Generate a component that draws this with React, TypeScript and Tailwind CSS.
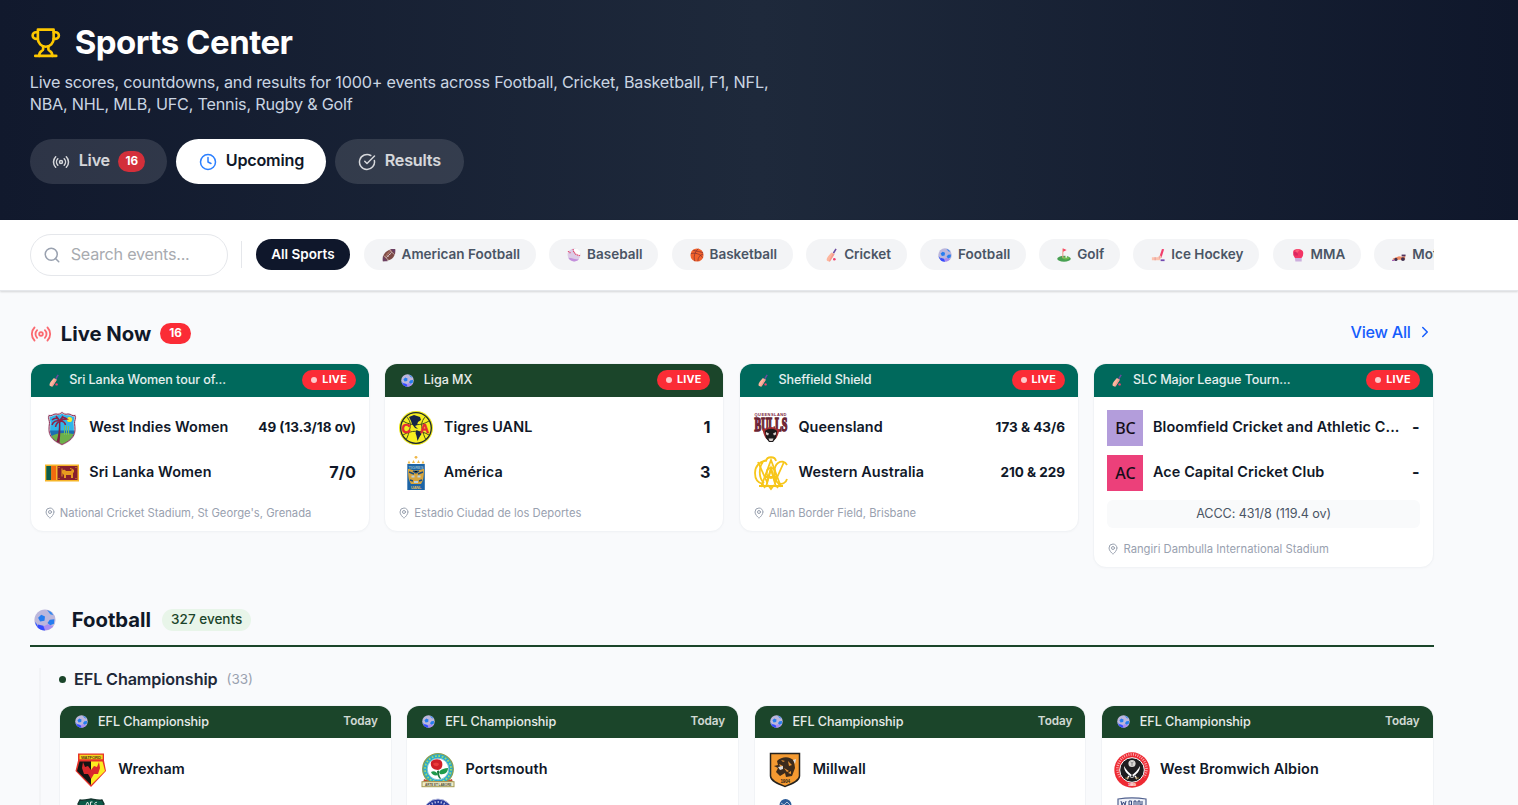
import { ReactNode, useState } from 'react';
import { ChevronRight, CircleCheckBig, Clock, MapPin, Radio, Search } from 'lucide-react';

type SportKey =
  | 'american-football'
  | 'baseball'
  | 'basketball'
  | 'cricket'
  | 'football'
  | 'golf'
  | 'ice-hockey'
  | 'mma'
  | 'motorsport';

interface Team {
  name: string;
  logo: ReactNode;
  score?: string;
}

interface LiveMatch {
  sport: SportKey;
  league: string;
  teams: Team[];
  venue: string;
  note?: string;
}

function TrophyIcon() {
  return (
    <svg
      className="mt-[2px] size-[31.500px] shrink-0 text-[#fdc700]"
      viewBox="0 0 24 24"
      fill="none"
      stroke="currentColor"
      strokeWidth="2"
      strokeLinecap="round"
      strokeLinejoin="round"
    >
      <path d="M6 9H4.500a2.500 2.500 0 0 1 0-5H6" />
      <path d="M18 9h1.500a2.500 2.500 0 0 0 0-5H18" />
      <path d="M4 22h16" />
      <path d="M10 14.660V17c0 .55-.47.98-.97 1.210C7.850 18.750 7 20.240 7 22" />
      <path d="M14 14.660V17c0 .55.47.98.97 1.210C16.150 18.750 17 20.240 17 22" />
      <path d="M18 2H6v7a6 6 0 0 0 12 0V2Z" />
    </svg>
  );
}

// Small sport glyphs, drawn on a 16x16 grid
function SportIcon({ sport, className }: { sport: SportKey; className: string }) {
  return (
    <svg className={className} viewBox="0 0 16 16">
      {sport === 'american-football' && (
        <g>
          <path d="M1 15C0 9 3 1 15 1c1 8-3 14-14 14Z" fill="#7d4b45" />
          <path d="M3 12C4 7 7 3 12 2 9 5 6 9 3 12Z" fill="#a0675a" />
          <path d="M1 9.500 6.500 15H1ZM9.500 1 15 6.500V1Z" fill="#6b3f63" />
          <path d="m2 8.500 5.500 5.500M8.500 2 14 7.500" stroke="#e9dff0" strokeWidth=".7" />
          <path d="m5 11 6-6M6 8.500 7.500 10M8 6.500 9.500 8" stroke="#f4eef8" strokeWidth=".7" />
        </g>
      )}
      {sport === 'baseball' && (
        <g>
          <circle cx="8" cy="8" r="7.300" fill="#dccbe6" />
          <path d="M1.500 11a7.300 7.300 0 0 0 12 2c-4 0-8-2-12-2Z" fill="#c38fdc" />
          <path d="M7.500 1c0 4.500 3.500 7.500 7.500 8V4l-3-3Z" fill="#fff" />
          <path
            d="M7 1c0 4.500 4 8 8.500 7.500M1 4c1.500 0 2.500 1 3 2.500"
            stroke="#e0476c"
            strokeWidth="1.300"
            strokeDasharray="1.500 .6"
            fill="none"
          />
        </g>
      )}
      {sport === 'basketball' && (
        <g>
          <circle cx="8" cy="8" r="7.500" fill="#f2622c" />
          <path
            d="M1 6.500c5-1.500 10 0 13.500 4.500M9.500.8C5 5 4 10 5.500 15M3.500 2.500C8 4 12 4 15 5.500M9 15c0-4 2-7 6-8"
            stroke="#7c3132"
            strokeWidth=".8"
            fill="none"
          />
        </g>
      )}
      {sport === 'cricket' && (
        <g>
          <path d="m10 5.500 3-5 1.500 1-3 5Z" fill="#6b4aa0" />
          <path d="M8.500 5 12 7l-5 8c-1 .8-4 0-4-1.500C3 11 6 8 8.500 5Z" fill="#fdb69e" />
          <path d="m10 6 2 1-5 8-1.500.3Z" fill="#f59a91" />
          <circle cx="11.800" cy="12.800" r="1.500" fill="#f0426f" />
        </g>
      )}
      {sport === 'football' && (
        <g>
          <circle cx="8" cy="8" r="7.700" fill="#bcb7dc" />
          <path d="M1.500 11.500a7.500 7.500 0 0 0 12.500 1l-4-1.500-4 2Z" fill="#a98df0" />
          <path d="m5.300 4.200 2.700 1.300-.4 3-3.200.6L3 6.400Z" fill="#257df0" />
          <path d="m11.500 7.800 3.300-.3-.3 3.200-2.700 1.200-2-1.800Z" fill="#257df0" />
          <path d="m9.500.8 3 1.400 1.600 2.400-2.300-.8Z" fill="#3489ef" />
          <path d="M.7 9.200 2.200 11l.4 2.200A7.700 7.700 0 0 1 .7 9.200Z" fill="#315cff" />
          <path d="m2.800 11.200 4 1 1.200 3.400c-2.500 0-4.500-1-5.600-2.600Z" fill="#334cff" />
        </g>
      )}
      {sport === 'golf' && (
        <g>
          <ellipse cx="8" cy="12.300" rx="7.700" ry="3.400" fill="#47a052" />
          <ellipse cx="10" cy="11.500" rx="4" ry="1.500" fill="#72ba52" />
          <path d="M6 .5h1.300V11H6Z" fill="#e9a391" />
          <path d="m7 .5 4 1.800-4 2Z" fill="#f8405f" />
          <circle cx="10.500" cy="10" r="1" fill="#fff" />
        </g>
      )}
      {sport === 'ice-hockey' && (
        <g>
          <path d="M12.500 1 15 1.500 12 11l-2.500-.5Z" fill="#f13d6b" />
          <path d="M1 10.500h6.500l3-2 1.500 1-2 4.500H1Z" fill="#fcc2ae" />
          <path d="M4 10.500h1.500V14H4ZM9 9.500l2 .3-1.200 3Z" fill="#e8a5a2" />
          <rect x="11" y="13" width="4.500" height="2" fill="#7248b0" />
        </g>
      )}
      {sport === 'mma' && (
        <g>
          <path d="M2.500 4C2.500 0 14 0 14 5.500c0 3.500-1 4.500-2 6H4.500L2.500 8Z" fill="#f33465" />
          <path d="M5 3c1.500-2 4-1.500 5-1L6 7Z" fill="#fa5b78" />
          <path d="M3 5c3-1 5 0 5 3.500H4Z" fill="#d92761" />
          <path d="M4.500 11.500h7.700v4H5Z" fill="#cdaedd" />
        </g>
      )}
      {sport === 'motorsport' && (
        <g>
          <path d="m1 12 4-1.500 3-1 3 .5 4-1v4.500H1Z" fill="#f08a62" />
          <path d="M11 7.500h4.500v2H11Z" fill="#54355f" />
          <circle cx="4.500" cy="13" r="1.800" fill="#40304f" />
          <circle cx="12.500" cy="12.700" r="2.200" fill="#40304f" />
          <path d="M0 13.500h3v1.200H0Z" fill="#9c4ba6" />
        </g>
      )}
    </svg>
  );
}

function Crest({ children }: { children: ReactNode }) {
  return (
    <svg className="size-9 shrink-0" viewBox="0 0 36 36">
      {children}
    </svg>
  );
}

const westIndies = (
  <Crest>
    <path
      d="M5 5.500C8 6.500 9 4 12 4c3 .8 4 0 6-1.500C20 4 21 4.800 24 4c3 0 4 2.500 7 1.500 1.500 3-1 5-.5 8 1 8 1.500 15-12.500 21C4 28.500 4.500 21.500 5.500 13.500 6 10.500 3.500 8.500 5 5.500Z"
      fill="#2fb5ea"
      stroke="#e5d7e0"
      strokeWidth="2"
    />
    <path d="M6 20.500h24.500c-.5 6-4 10-12.500 13.500C10 31 6.500 27 6 20.500Z" fill="#1c6fb0" />
    <path d="M7.500 26c6-4 15-3.500 22-2-2 5-6 8-11.500 10.300C12.500 32 9 30 7.500 26Z" fill="#6cb14a" />
    <circle cx="25.500" cy="9.500" r="2.600" fill="#f3e72c" />
    <path d="M20.500 16v9M22.500 15.500V25M24.500 16v9" stroke="#74bd63" strokeWidth="1" />
    <path d="M15 11c0 8-.5 14-2.500 21l3 1c1-8 1-14 .8-22Z" fill="#7e1f42" />
    <path
      d="M8 10c3-3 6-2 8 1 1-4 4-4.500 7-2-3 0-5 0-7 2 3 0 5 1.500 5.500 4M16 11c-4-1-7 1-8 4M16 11c-2 1-4 3-4.500 6M12 6l4 5 3-5"
      fill="none"
      stroke="#8e2248"
      strokeWidth="1.500"
    />
    <path
      d="M5 5.500C8 6.500 9 4 12 4c3 .8 4 0 6-1.500C20 4 21 4.800 24 4c3 0 4 2.500 7 1.500 1.500 3-1 5-.5 8 1 8 1.500 15-12.500 21C4 28.500 4.500 21.500 5.500 13.500 6 10.500 3.500 8.500 5 5.500Z"
      fill="none"
      stroke="#93385c"
      strokeWidth="1"
    />
  </Crest>
);

const sriLanka = (
  <Crest>
    <rect x="1" y="9.500" width="34" height="17" fill="#f6b529" />
    <rect x="2.300" y="11" width="5" height="14" fill="#0c5c4b" />
    <rect x="7.300" y="11" width="4.700" height="14" fill="#f26a10" />
    <rect x="13.500" y="11" width="20" height="14" fill="#87202d" />
    <path
      d="M18 15.500c2-1.500 3.500-.5 4 .5h5c1-2 2-2 3-1v2l-1 1v5h-2v-3h-5v3h-2v-3L18 18Z"
      fill="#e69a20"
    />
    <path d="M18 13.500v8M26 13.500l3 1" stroke="#e69a20" strokeWidth="1" />
    <path d="M14.500 12h1v1h-1ZM31.500 12h1v1h-1ZM14.500 23h1v1h-1ZM31.500 23h1v1h-1Z" fill="#e69a20" />
  </Crest>
);

const clubAmerica = (
  <Crest>
    <circle cx="18" cy="18" r="17" fill="#e9e51c" />
    <circle cx="18" cy="18" r="15.300" fill="#f5ee20" stroke="#1c2632" strokeWidth="1.300" />
    <path
      d="M8 6c4 4 5 8 4 12-1 5-2 8-4 12M28 6c-4 4-5 8-4 12 1 5 2 8 4 12M5 11c8 5 18 5 26 0M5 25c8-5 18-5 26 0"
      stroke="#44501f"
      strokeWidth="1"
      fill="none"
    />
    <path d="m11 7 5-2 6 2 1 3-3 2-1 3-2 1 2 2 1 1-3-1-3-4-1-3Z" fill="#152447" />
    <path d="m18.500 20 4 2 1 2-2 3-2 4-1-5-1-3Z" fill="#152447" />
    <g fontSize="12.500" fontWeight="700" fontFamily="Liberation Sans, sans-serif" fill="#e32735" stroke="#e32735" strokeWidth=".6">
      <text x="3.500" y="22.500">
        C
      </text>
      <text x="22" y="22.500">
        A
      </text>
    </g>
  </Crest>
);

const tigres = (
  <Crest>
    <circle cx="18" cy="2.300" r="1.400" fill="#efb84a" />
    <path d="m11 5.500 1.500 3h-3ZM15.500 5l1.500 3h-3ZM20.500 5l1.500 3h-3ZM25 5.500l1.500 3h-3Z" fill="#efb84a" />
    <rect x="9.300" y="9" width="17.500" height="26" fill="#1d64a5" />
    <path d="M10 14c3 0 4 1.500 8 1.500S23 14 26 14c0 8-1 12-3 15H13c-2-3-3-7-3-15Z" fill="#d7a43c" />
    <path d="m11 17 5 2M25 17l-5 2M12 25l3 1M24 25l-3 1M15 16l3 2 3-2" stroke="#1b4b7c" strokeWidth="1.400" />
    <path d="M13.500 20.500h3v2h-3ZM19.500 20.500h3v2h-3ZM16 26h4v2h-4Z" fill="#b9d0e2" />
    <text x="10.500" y="13.500" fontSize="4.200" fontWeight="700" fontFamily="Liberation Sans, sans-serif" fill="#8eb3c9" textLength="15">
      TIGRES
    </text>
    <text x="13" y="34" fontSize="4" fontWeight="700" fontFamily="Liberation Sans, sans-serif" fill="#e0ba62" textLength="10.500">
      UANL
    </text>
  </Crest>
);

const queensland = (
  <Crest>
    <text x="1.500" y="5.800" fontSize="4" fontWeight="700" fontFamily="Liberation Sans, sans-serif" fill="#7a2440" textLength="32">
      QUEENSLAND
    </text>
    <text
      x="1.500"
      y="11.600"
      fontSize="10"
      fontWeight="700"
      fontFamily="Liberation Serif, serif"
      fill="#84263f"
      stroke="#6a2433"
      strokeWidth=".9"
      transform="scale(1 1.850)"
    >
      BULLS
    </text>
    <path d="M9.500 19c3 1 5-2 8.500-2s5.500 3 8.500 2c-1 7-4 12-8.500 12s-7.500-5-8.500-12Z" fill="#a52d30" />
    <path d="M12 21c3-3 9-3 12 0l-1 7-3 4h-4l-3-4Z" fill="#1d1a1c" />
    <path d="m13 22 3 1.500-1 2-2-1ZM23 22l-3 1.500 1 2 2-1ZM15.500 28.500h5l-1 2.500h-3Z" fill="#d8cfcc" />
  </Crest>
);

const westernAustralia = (
  <Crest>
    <g fill="none" stroke="#f7c61a" strokeWidth="1.800">
      <path d="M14 5.500C6 6 2 12 2 18s3 10 8 11M10 7C6 12 5 22 11 28M34 10c-2-4-6-4-9-2-5 4-5 15 0 20 4 2 8 0 9-4" />
      <path d="m5 7 9 20 4-14 4 14 9-20" />
      <path d="m8 32 10-27 10 27M13 32l5-18 5 18M12 22h12M6 31h24" />
      <path d="M13 6c1-5 9-5 10 0M9 28l3 5M27 28l-3 5M15 30l3 4 3-4" />
      <path d="M14 16c1-4 7-4 8 0s-1 7-4 7-5-3-4-7Z" />
    </g>
  </Crest>
);

const watford = (
  <Crest>
    <path d="M5 1.500h26v7L33 19 18 35 2.500 19 5 8.500Z" fill="#e8312a" />
    <path d="M6.500 2.700h23.200v4.600H6.500Z" fill="#f4d51c" />
    <path d="M6.500 9.500H18V33L4 19Z" fill="#141414" />
    <path d="M18 9.500h11.500L32 19 18 33Z" fill="#fbed20" />
    <path d="m10 10 2 5 3-1 3 4 3-4 3 1 2-5 1 6-2 6-4 0-3 5-3-5-4 0-2-6Z" fill="#d9282c" />
    <text x="8" y="6.800" fontSize="4.200" fontWeight="700" fontFamily="Liberation Sans, sans-serif" fill="#5b3b12" textLength="20">
      WATFORD
    </text>
  </Crest>
);

const blackburn = (
  <Crest>
    <circle cx="18" cy="17" r="15.300" fill="#26a9cf" stroke="#8ba052" strokeWidth="1.300" />
    <circle cx="18" cy="17" r="13" fill="none" stroke="#9fdb6c" strokeWidth="1.800" strokeDasharray="1.800 1.600" />
    <circle cx="18" cy="17" r="10.800" fill="#fff" stroke="#7dc4cc" />
    <path d="M17 19c0 4 1 6 3 8l1-.5c-2-3-2-5-2-8Z" fill="#177a3b" />
    <path d="M11 20c3-2 6 0 7 3-3 1-6 0-7-3ZM19 20c2-3 6-4 9-4 0 4-3 7-8 6Z" fill="#1f9a4b" />
    <path d="M11 10c2-3 9-4 11 0 1 4 0 7-4 8-5 0-8-3-7-8Z" fill="#cf2028" />
    <path d="M13 12c2-2 5-1 6 0-1 3-4 3-6 0Z" fill="#e93b3b" />
    <path d="m4 27 5 2h18l5-2 1 4H3Z" fill="#bf4a2f" />
    <rect x="2" y="29.700" width="32" height="5" fill="#efecc9" stroke="#a39a52" strokeWidth="1" />
    <text x="5" y="33.500" fontSize="3.200" fontWeight="700" fontFamily="Liberation Sans, sans-serif" fill="#54503b" textLength="26.500">
      ARTE ET LABORE
    </text>
  </Crest>
);

const hull = (
  <Crest>
    <path d="M3.500 1.500h29V24c0 5-8 8-14.500 10.500C11.500 32 3.500 29 3.500 24Z" fill="#f49a31" stroke="#25231f" strokeWidth="1.500" />
    <path d="M10 9c5-5 13-5 17 0l1 7-3 8-6 1-1-4-5 3-4-4 2-4-4-2 4-1Z" fill="#3b2b1c" />
    <path d="m12 12 4 2-2 2ZM21 9l4 4-3 1ZM17 16l5 3-2 1ZM14 8l4 1-2 1ZM21 21l3-2v3Z" fill="#e99433" />
    <path d="m11 15 5-1v3l-3 1ZM26 8l3-1-1 5Z" fill="#ddd" />
    <text x="13.500" y="30.500" fontSize="4.500" fontWeight="700" fontFamily="Liberation Sans, sans-serif" fill="#2b2117" textLength="9.500">
      1904
    </text>
  </Crest>
);

const sheffieldUnited = (
  <Crest>
    <circle cx="18" cy="18" r="17.700" fill="#ee2a33" />
    <path
      d="M6 25A14.500 14.500 0 1 1 30 25"
      fill="none"
      stroke="#f9a9ad"
      strokeWidth="2.600"
      strokeDasharray="1 1.300"
    />
    <circle cx="18" cy="18" r="12.300" fill="#1d1d1f" stroke="#fff" strokeWidth="1" />
    <circle cx="18" cy="11.500" r="3.600" fill="#d9d7d4" />
    <path d="m16.500 10 1.500 1 1.500-1M18 11v3" stroke="#77777a" strokeWidth=".8" fill="none" />
    <path d="M10 14c0 5 3 8 9 12l1-1.500C15 21 12 18 10 14ZM26 14c0 5-3 8-9 12l-1-1.500C21 21 24 18 26 14Z" fill="#fff" />
    <path d="m15 24-2 3M21 24l2 3" stroke="#fff" strokeWidth="1.500" />
    <path d="M11 26h4M21 26h4" stroke="#8b6f2c" strokeWidth="1.200" />
    <text x="14" y="34.300" fontSize="4" fontWeight="700" fontFamily="Liberation Sans, sans-serif" fill="#fff" textLength="8">
      1889
    </text>
  </Crest>
);

const plymouth = (
  <Crest>
    <path d="M7 3c3 1 6 0 11-1 5 1 8 2 11 1l2 4c-2 3-1 6-1 10 0 8-6 12-12 16C12 29 6 25 6 17c0-4 1-7-1-10Z" fill="#0c5a48" stroke="#13352e" strokeWidth="1.400" />
    <path d="m13 8 1.500-3L16 8M17.500 8V5h2M24 5.500c-3-1-3 3.500 0 2.500" fill="none" stroke="#dfe9e5" strokeWidth="1" />
  </Crest>
);

const blueRoundel = (
  <Crest>
    <circle cx="18" cy="17" r="15" fill="#25379b" stroke="#b8bde0" strokeWidth="1" />
    <circle cx="18" cy="17" r="12" fill="none" stroke="#c9cdea" strokeWidth="2.200" strokeDasharray="1.200 1.900" />
    <circle cx="18" cy="17" r="9" fill="#fff" stroke="#25379b" />
  </Crest>
);

const blueLion = (
  <Crest>
    <circle cx="18.500" cy="8" r="6" fill="#2c5c98" />
    <path d="m14 6 3 2 3-3 3 3M15 9h6" stroke="#aebfd6" strokeWidth="1" fill="none" />
  </Crest>
);

const westBrom = (
  <Crest>
    <path d="M4 2c9-1.500 19-1.500 28 0v20c0 6-8 10-14 12C12 32 4 28 4 22Z" fill="#eef1f8" stroke="#52628f" strokeWidth="1.200" />
    <path d="m7 4 1 4 1.500-3L11 8l1-4M15 8V4h2.500v4ZM20 8V4h2v4M24 8V4h2v4h2V4" fill="none" stroke="#33467b" strokeWidth="1" />
    <path d="M6 10.500h24M10 10v10M16 10v10M22 10v10M28 10v10" stroke="#52628f" strokeWidth="1.500" />
  </Crest>
);

function Initials({ text, className }: { text: string; className: string }) {
  return (
    <div
      className={`flex size-9 shrink-0 items-center justify-center font-['Noto_Sans',sans-serif] text-[16px] leading-none font-medium text-[#150d18] ${className}`}
    >
      {text}
    </div>
  );
}

const sports: { key: SportKey; label: string }[] = [
  { key: 'american-football', label: 'American Football' },
  { key: 'baseball', label: 'Baseball' },
  { key: 'basketball', label: 'Basketball' },
  { key: 'cricket', label: 'Cricket' },
  { key: 'football', label: 'Football' },
  { key: 'golf', label: 'Golf' },
  { key: 'ice-hockey', label: 'Ice Hockey' },
  { key: 'mma', label: 'MMA' },
  { key: 'motorsport', label: 'Motorsport' },
];

const liveMatches: LiveMatch[] = [
  {
    sport: 'cricket',
    league: 'Sri Lanka Women tour of...',
    teams: [
      { name: 'West Indies Women', logo: westIndies, score: '49 (13.3/18 ov)' },
      { name: 'Sri Lanka Women', logo: sriLanka, score: '7/0' },
    ],
    venue: "National Cricket Stadium, St George's, Grenada",
  },
  {
    sport: 'football',
    league: 'Liga MX',
    teams: [
      { name: 'Tigres UANL', logo: clubAmerica, score: '1' },
      { name: 'América', logo: tigres, score: '3' },
    ],
    venue: 'Estadio Ciudad de los Deportes',
  },
  {
    sport: 'cricket',
    league: 'Sheffield Shield',
    teams: [
      { name: 'Queensland', logo: queensland, score: '173 & 43/6' },
      { name: 'Western Australia', logo: westernAustralia, score: '210 & 229' },
    ],
    venue: 'Allan Border Field, Brisbane',
  },
  {
    sport: 'cricket',
    league: 'SLC Major League Tourn...',
    teams: [
      { name: 'Bloomfield Cricket and Athletic C...', logo: <Initials text="BC" className="bg-[#b39ddb]" />, score: '-' },
      { name: 'Ace Capital Cricket Club', logo: <Initials text="AC" className="bg-[#ec407a]" />, score: '-' },
    ],
    note: 'ACCC: 431/8 (119.4 ov)',
    venue: 'Rangiri Dambulla International Stadium',
  },
];

const championship: Team[][] = [
  [{ name: 'Wrexham', logo: watford }, { name: '', logo: plymouth }],
  [{ name: 'Portsmouth', logo: blackburn }, { name: '', logo: blueRoundel }],
  [{ name: 'Millwall', logo: hull }, { name: '', logo: blueLion }],
  [{ name: 'West Bromwich Albion', logo: sheffieldUnited }, { name: '', logo: westBrom }],
];

function TeamRow({ team }: { team: Team }) {
  const score = team.score ?? '';
  return (
    <div className="flex h-9 items-center">
      {team.logo}
      <span className="ml-[9.500px] flex-1 pb-[3px] text-[14.400px] leading-5 font-semibold tracking-[0.1px] whitespace-nowrap text-[#101828]">
        {team.name}
      </span>
      <span
        className={`pb-[2px] leading-5 font-bold whitespace-nowrap text-[#101828] ${
          score.length > 3 ? 'text-[13.500px]' : 'text-[16.200px]'
        }`}
      >
        {score}
      </span>
    </div>
  );
}

function LiveCard({ match }: { match: LiveMatch }) {
  return (
    <div className="overflow-hidden rounded-[13px] border border-[#f1f3f6] bg-white shadow-[0_1px_2px_rgba(0,0,0,0.02)]">
      <div
        className={`flex h-[33px] items-center pr-[13px] pb-px pl-[16px] ${
          match.sport === 'football' ? 'bg-[#1b452a]' : 'bg-[#00695c]'
        }`}
      >
        <SportIcon sport={match.sport} className="size-[13px] shrink-0" />
        <span className="ml-[9.500px] flex-1 text-[12.600px] leading-4 font-medium tracking-[-0.080px] whitespace-nowrap text-white/90">
          {match.league}
        </span>
        <span className="flex h-5 items-center gap-[5px] rounded-full bg-[#fb2c36] px-[9px] pt-px text-[10.800px] font-bold tracking-[0.2px] text-white">
          <span className="-mt-px size-[6px] rounded-full bg-white/75" />
          LIVE
        </span>
      </div>
      <div className="pt-[13px] pr-[13px] pb-[9px] pl-[13px]">
        <div className="flex flex-col gap-[9px]">
          {match.teams.map((team) => (
            <TeamRow key={team.name} team={team} />
          ))}
        </div>
        {match.note && (
          <div className="mt-[9px] mb-[12px] flex h-7 items-center justify-center rounded-md bg-[#f9fafb] text-[12.600px] tracking-[-0.080px] text-[#4a5565]">
            {match.note}
          </div>
        )}
        <div
          className={`flex h-[18px] items-center gap-1 text-[11.250px] whitespace-nowrap text-[#99a1af] ${
            match.note ? '' : 'mt-[13px]'
          }`}
        >
          <MapPin className="size-3" />
          {match.venue}
        </div>
      </div>
    </div>
  );
}

function UpcomingCard({ teams }: { teams: Team[] }) {
  return (
    <div className="h-[190px] overflow-hidden rounded-[13px] border border-[#f1f3f6] bg-white">
      <div className="flex h-[32px] items-center bg-[#1b452a] pr-[13px] pl-[15px]">
        <SportIcon sport="football" className="-mt-px size-[13px] shrink-0" />
        <span className="ml-[10px] flex-1 text-[12.600px] font-medium tracking-[-0.080px] text-white/90">
          EFL Championship
        </span>
        <span className="text-[11.700px] font-semibold text-white/80">Today</span>
      </div>
      <div className="flex flex-col gap-[9px] px-[12.600px] pt-[14px]">
        {teams.map((team, i) => (
          <TeamRow key={i} team={team} />
        ))}
      </div>
    </div>
  );
}

export default function App() {
  const [query, setQuery] = useState('');
  const [activeSport, setActiveSport] = useState('all');

  return (
    <div className="h-[805px] overflow-hidden bg-[#f9fafc] font-['Inter',sans-serif]">
      {/* Hero */}
      <header className="h-[220px] bg-[linear-gradient(90deg,#11192d,#1e293b,#0f172b)] pt-[21px] pl-[29.700px]">
        <div className="flex h-[41px] items-center gap-[13.500px]">
          <TrophyIcon />
          <h1 className="text-[33px] leading-10 font-bold tracking-[-0.500px] text-white">Sports Center</h1>
        </div>
        <p className="mt-[9px] w-[756px] text-[16.200px] leading-[22px] tracking-[-0.210px] text-[#cad5e2]">
          Live scores, countdowns, and results for 1000+ events across Football, Cricket, Basketball, F1, NFL, NBA, NHL,
          MLB, UFC, Tennis, Rugby &amp; Golf
        </p>
        <div className="mt-[24px] flex gap-[9px] text-[16.200px] font-semibold tracking-[-0.220px]">
          <button className="flex h-[45px] w-[137px] items-center rounded-full bg-white/12 pl-[22px] text-white/80">
            <Radio className="size-[18px]" />
            <span className="ml-[9px] pb-[3px]">Live</span>
            <span className="ml-[8.500px] rounded-full bg-[#d32f3a] px-[7px] py-[3px] text-[11.700px] leading-[15px] font-bold tracking-normal text-white">
              16
            </span>
          </button>
          <button className="flex h-[45px] w-[150px] items-center rounded-full bg-white pl-[23px] text-[#101828]">
            <Clock className="size-[18px] text-[#2b7fff]" />
            <span className="ml-[9px] pb-[3px]">Upcoming</span>
          </button>
          <button className="flex h-[45px] w-[129px] items-center rounded-full bg-white/12 pl-[23px] text-white/80">
            <CircleCheckBig className="size-[18px]" />
            <span className="ml-[9px] pb-[3px]">Results</span>
          </button>
        </div>
      </header>

      {/* Filters */}
      <div className="h-[71px] border-b border-[#e5e7eb] bg-white shadow-[0_1px_2px_rgba(0,0,0,0.15)]">
        <div className="ml-[29.700px] flex h-[69px] w-[1404px] items-center overflow-hidden">
          <label className="flex h-[42px] w-[198px] shrink-0 items-center rounded-full border border-[#e5e7eb] pl-[12.500px]">
            <Search className="size-[18px] text-[#99a1af]" />
            <input
              className="ml-[9.500px] w-[140px] pb-px text-[16.200px] tracking-[-0.250px] text-[#101828] outline-none placeholder:text-[#a8abb0]"
              placeholder="Search events..."
              value={query}
              onChange={(e) => setQuery(e.target.value)}
            />
          </label>
          <div className="ml-[13px] h-[27px] w-px shrink-0 bg-[#e5e7eb]" />
          <div className="ml-[14px] flex gap-[13.500px] text-[13.500px] font-semibold whitespace-nowrap">
            <button
              className={`h-[31px] shrink-0 rounded-full px-[15.500px] ${
                activeSport === 'all' ? 'bg-[#0f172b] text-white' : 'bg-[#f3f4f6] text-[#4a5565]'
              }`}
              onClick={() => setActiveSport('all')}
            >
              All Sports
            </button>
            {sports.map((sport) => (
              <button
                key={sport.key}
                className={`flex h-[31px] shrink-0 items-center gap-[6px] rounded-full pr-[15.500px] pl-[18px] ${
                  activeSport === sport.key ? 'bg-[#0f172b] text-white' : 'bg-[#f3f4f6] text-[#4a5565]'
                }`}
                onClick={() => setActiveSport(sport.key)}
              >
                <SportIcon sport={sport.key} className="size-[14px]" />
                {sport.label}
              </button>
            ))}
          </div>
        </div>
      </div>

      <main className="ml-[29.700px] w-[1404px]">
        {/* Live now */}
        <section className="pt-[29px]">
          <div className="flex h-[27px] items-center">
            <Radio className="size-[22px] text-[#fb6a71]" />
            <h2 className="ml-[9px] text-[20.300px] leading-7 font-bold text-[#101828]">Live Now</h2>
            <span className="ml-[9px] rounded-full bg-[#fb2c36] px-[9px] py-[3px] text-[11.700px] leading-[15px] font-bold text-white">
              16
            </span>
            <button className="ml-auto flex items-center gap-[5px] pb-[2px] text-[16.200px] font-medium tracking-[-0.250px] text-[#155dfc]">
              View All
              <ChevronRight className="size-[18px]" />
            </button>
          </div>
          <div className="mt-[16px] grid grid-cols-4 items-start gap-[14.400px]">
            {liveMatches.map((match) => (
              <LiveCard key={match.league} match={match} />
            ))}
          </div>
        </section>

        {/* Football */}
        <section className="mt-[37px]">
          <div className="flex h-[42px] items-start border-b-2 border-[#1b452a] pl-1">
            <SportIcon sport="football" className="mt-[4px] size-[22px]" />
            <h2 className="ml-4 text-[20.300px] leading-[30px] font-bold text-[#101828]">Football</h2>
            <span className="mt-[4px] ml-[11px] h-[22px] rounded-full bg-[#e8f5e9] px-[9px] text-[13.500px] leading-[21px] font-medium text-[#1b452a]">
              327 events
            </span>
          </div>
          <div className="mt-[21px] ml-[9px] border-l-2 border-[#f3f4f6] pl-[18.400px]">
            <div className="flex h-[22px] items-center">
              <span className="mt-px size-[7px] rounded-full bg-[#1b452a]" />
              <h3 className="ml-[8px] text-[16.200px] font-semibold tracking-[-0.130px] text-[#1e2939]">EFL Championship</h3>
              <span className="ml-[9px] text-[13.500px] text-[#99a1af]">(33)</span>
            </div>
            <div className="mt-[15px] grid grid-cols-4 gap-[14.400px]">
              {championship.map((teams) => (
                <UpcomingCard key={teams[0].name} teams={teams} />
              ))}
            </div>
          </div>
        </section>
      </main>
    </div>
  );
}
